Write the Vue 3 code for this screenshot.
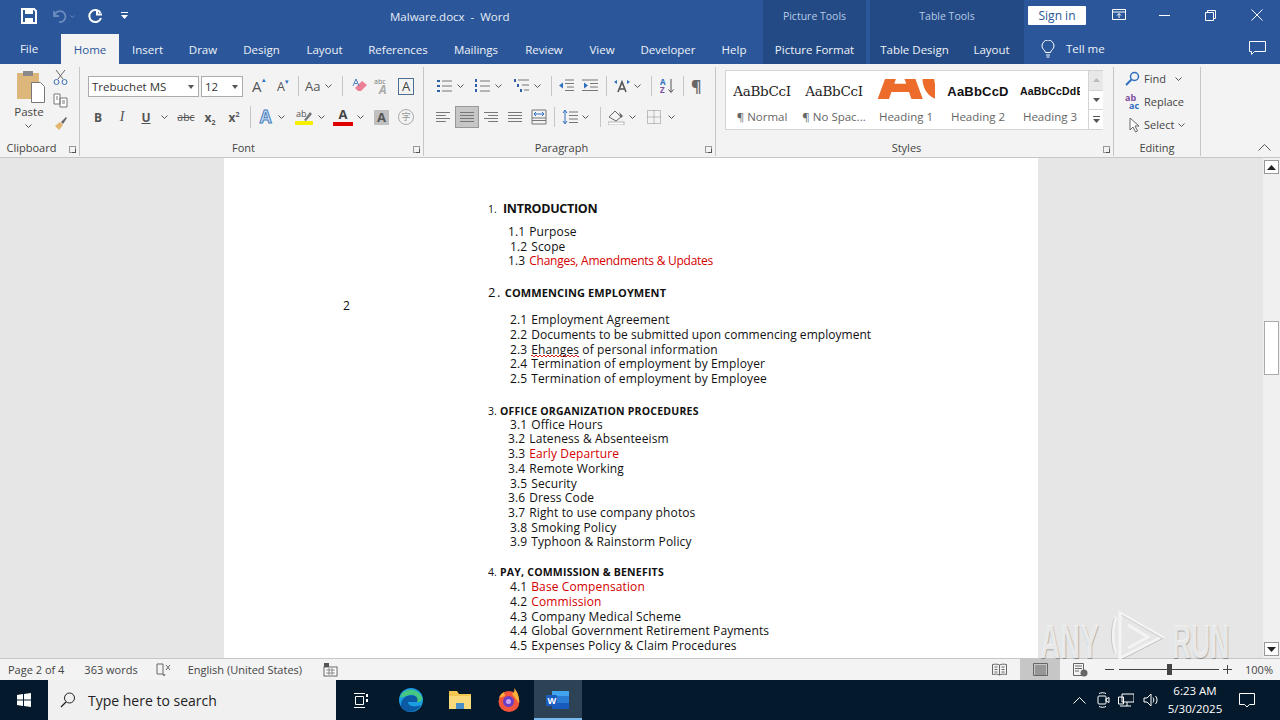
<template>
  <div class="word">
    <header class="titlebar">
      <div class="qat">
        <svg width="16" height="16" viewBox="0 0 16 16"><path d="M1 1h12l2 2v12H1z" fill="none" stroke="#fff" stroke-width="2" /><rect x="4" y="1" width="8" height="5" fill="#fff" /><rect x="4" y="10" width="8" height="5" fill="#fff" /></svg>
        <svg class="qat-undo" width="16" height="16" viewBox="0 0 16 16"><path d="M3 3v5h5M3.500 8A5.500 5.500 0 1 1 8 14" fill="none" stroke="#6a8bbd" stroke-width="1.8" /></svg>
        <svg class="qat-chev" width="5" height="3" viewBox="0 0 5 3"><path d="M.5.5l2 2 2-2" fill="none" stroke="#6a8bbd" /></svg>
        <svg class="qat-redo" width="16" height="16" viewBox="0 0 16 16"><path d="M10 1.500v5h5M13.500 5A6 6 0 1 0 14 10" fill="none" stroke="#fff" stroke-width="2" /></svg>
        <svg class="qat-more" width="8" height="8" viewBox="0 0 8 8"><rect width="7" height="1" fill="#fff" /><path d="M0 3h7L3.500 7z" fill="#fff" /></svg>
      </div>
      <div class="doc-title">Malware.docx&nbsp; -&nbsp; Word</div>
      <div class="ctx ctx-pic">Picture Tools</div>
      <div class="ctx ctx-table">Table Tools</div>
      <div class="sign">Sign in</div>
      <div class="win">
        <svg width="14" height="12" viewBox="0 0 14 12"><path d="M.5.500h13v10H.5zM.5 3h13M7 9V4.500M5 6.500l2-2 2 2" fill="none" stroke="#fff" /></svg>
        <svg width="11" height="1" viewBox="0 0 11 1"><rect width="11" height="1" fill="#fff" /></svg>
        <svg width="11" height="11" viewBox="0 0 11 11"><path d="M.5 2.500h8v8h-8zM2.500 2.500v-2h8v8h-2" fill="none" stroke="#fff" /></svg>
        <svg width="12" height="12" viewBox="0 0 12 12"><path d="M.5.500l11 11M11.500.500l-11 11" stroke="#fff" fill="none" /></svg>
      </div>
    </header>

    <nav class="tabs">
      <span
        v-for="t in tabs"
        :key="t.label + t.w"
        class="tab"
        :class="[t.cls, { 'tab--on': t.on, 'tab--ctx': t.ctx }]"
        :style="{ width: t.w + 'px' }"
      >{{ t.label }}</span>
      <svg class="bulb" width="14" height="18" viewBox="0 0 14 18"><path d="M4.500 12.500C4 10 1 9 1 6a6 6 0 0 1 12 0c0 3-3 4-3.500 6.500zM5 15h4M5.500 17h3" fill="none" stroke="#fff" /></svg>
      <span class="tell">Tell me</span>
      <svg class="comment" width="17" height="15" viewBox="0 0 17 15"><path d="M.5.500h16v10H5.500l-3 3v-3h-2z" fill="none" stroke="#fff" /></svg>
    </nav>

    <section class="ribbon">
      <div class="group g-clip">
        <div class="g-body clip-body">
          <div class="paste">
            <svg width="30" height="34" viewBox="0 0 30 34"><rect x="1" y="3" width="22" height="26" fill="#dcb67a" /><rect x="7" y="1" width="10" height="5" fill="#8a8a8a" /><path d="M15.500 12.500h9l4 4v16h-13z" fill="#fff" stroke="#777" /></svg>
            <span class="paste-label">Paste</span>
            <svg class="chev" width="7" height="4" viewBox="0 0 7 4"><path d="M.5.500l3 3 3-3" fill="none" stroke="#555" /></svg>
          </div>
          <div class="clip-tools">
            <svg width="15" height="16" viewBox="0 0 15 16"><path d="M3 1l7 9M12 1L5 10" stroke="#666" fill="none" /><circle cx="3.500" cy="13" r="2.500" fill="none" stroke="#3c6eb4" /><circle cx="11.500" cy="13" r="2.500" fill="none" stroke="#3c6eb4" /></svg>
            <svg width="15" height="15" viewBox="0 0 15 15"><path d="M1 1h6v10H1zM7 5h7v9H7z" fill="#fff" stroke="#777" /><path d="M9 8h3M9 10h3M3 4h2M3 6h2" stroke="#777" /></svg>
            <svg width="15" height="15" viewBox="0 0 15 15"><path d="M8 6l5-5 1 1-4 6z" fill="#666" /><path d="M2 10l5-4 3 3-4 5z" fill="#e3b56e" /></svg>
          </div>
        </div>
        <div class="g-label">Clipboard<i class="launcher" /></div>
      </div>

      <div class="group g-font">
        <div class="g-body">
          <div class="row font-row1">
            <div class="combo combo-name">Trebuchet MS<b class="caret" /></div>
            <div class="combo combo-size">12<b class="caret" /></div>
            <span class="btn btn-a1">A<sup>▴</sup></span>
            <span class="btn btn-a2">A<sup>▾</sup></span>
            <i class="vsep" />
            <span class="btn btn-aa">Aa</span>
            <svg class="chev" width="7" height="4" viewBox="0 0 7 4"><path d="M.5.500l3 3 3-3" fill="none" stroke="#555" /></svg>
            <i class="vsep vsep-2" />
            <svg class="ic-erase" width="16" height="16" viewBox="0 0 16 16"><path d="M6 13l-3-3 7-7 5 4-6 6z" fill="#ec7f96" /><path d="M1 8l3-7 3 7M2.500 5.500h3" fill="none" stroke="#4d7cb8" /></svg>
            <svg class="ic-abc" width="15" height="16" viewBox="0 0 15 16"><text x="0" y="6" font-size="7" font-family="Open Sans" fill="#777">abc</text><text x="5" y="16" font-size="12" font-weight="700" font-style="italic" font-family="Open Sans" fill="#aaa">A</text></svg>
            <span class="ic-box">A</span>
          </div>
          <div class="row font-row2">
            <span class="fmt fmt-b">B</span>
            <span class="fmt fmt-i">I</span>
            <span class="fmt fmt-u">U</span>
            <svg class="chev" width="7" height="4" viewBox="0 0 7 4"><path d="M.5.500l3 3 3-3" fill="none" stroke="#555" /></svg>
            <span class="fmt fmt-s">abc</span>
            <span class="fmt fmt-x">x<sub>2</sub></span>
            <span class="fmt fmt-x">x<sup>2</sup></span>
            <i class="vsep vsep-3" />
            <span class="fmt fmt-fx">A</span>
            <svg class="chev" width="7" height="4" viewBox="0 0 7 4"><path d="M.5.500l3 3 3-3" fill="none" stroke="#555" /></svg>
            <svg class="ic-hl" width="18" height="16" viewBox="0 0 18 16"><rect y="12" width="18" height="4" fill="#f4f000" /><path d="M9 11l6-8 2 2-6 7z" fill="#777" /><text x="1" y="8" font-size="9" font-family="Open Sans" fill="#555">ab</text></svg>
            <svg class="chev" width="7" height="4" viewBox="0 0 7 4"><path d="M.5.500l3 3 3-3" fill="none" stroke="#555" /></svg>
            <span class="fmt fmt-red">A</span>
            <svg class="chev" width="7" height="4" viewBox="0 0 7 4"><path d="M.5.500l3 3 3-3" fill="none" stroke="#555" /></svg>
            <span class="fmt fmt-grey">A</span>
            <span class="fmt fmt-zi">字</span>
          </div>
        </div>
        <div class="g-label">Font<i class="launcher" /></div>
      </div>

      <div class="group g-para">
        <div class="g-body">
          <div class="row para-row1">
            <svg class="p-list" width="16" height="14" viewBox="0 0 16 14"><path d="M6 2h10M6 7h10M6 12h10" stroke="#777" /><path d="M1 1h3v2H1zM1 6h3v2H1zM1 11h3v2H1z" fill="#2f5fa5" /></svg>
            <svg class="chev" width="7" height="4" viewBox="0 0 7 4"><path d="M.5.500l3 3 3-3" fill="none" stroke="#555" /></svg>
            <svg class="p-list p-gap" width="16" height="14" viewBox="0 0 16 14"><path d="M6 2h10M6 7h10M6 12h10" stroke="#777" /><path d="M1 0h2v3H1zM1 5h2v3H1zM1 10h2v3H1z" fill="#2f5fa5" /></svg>
            <svg class="chev" width="7" height="4" viewBox="0 0 7 4"><path d="M.5.500l3 3 3-3" fill="none" stroke="#555" /></svg>
            <svg class="p-list p-gap2" width="16" height="14" viewBox="0 0 16 14"><path d="M5 1h11M9 6h7M11 11h5" stroke="#777" /><path d="M1 0h2v3H1zM4 5h2v3H4zM7 10h2v3H7z" fill="#2f5fa5" /></svg>
            <svg class="chev" width="7" height="4" viewBox="0 0 7 4"><path d="M.5.500l3 3 3-3" fill="none" stroke="#555" /></svg>
            <i class="vsep vsep-p" />
            <svg class="p-ind" width="16" height="14" viewBox="0 0 16 14"><path d="M7 1h9M7 4.500h9M9 8h7M7 11.500h9" stroke="#777" /><path d="M1 6.500l4-3v6z" fill="#2f6fc0" /></svg>
            <svg class="p-ind" width="16" height="14" viewBox="0 0 16 14"><path d="M0 1h16M8 4.500h8M8 8h8M0 11.500h16" stroke="#777" /><path d="M6 6.500l-4-3v6z" fill="#2f6fc0" /></svg>
            <i class="vsep vsep-p2" />
            <svg class="p-dir" width="16" height="14" viewBox="0 0 16 14"><path d="M4 13L8 3l4 10M5.500 10h5" fill="none" stroke="#555" stroke-width="1.6" /><path d="M0 3l3-2v4zM16 3l-3-2v4z" fill="#2f6fc0" /></svg>
            <svg class="chev" width="7" height="4" viewBox="0 0 7 4"><path d="M.5.500l3 3 3-3" fill="none" stroke="#555" /></svg>
            <i class="vsep vsep-p3" />
            <svg class="p-sort" width="16" height="16" viewBox="0 0 16 16"><text x="0" y="7" font-size="8" font-weight="700" font-family="Open Sans" fill="#2f6fc0">A</text><text x="0" y="15" font-size="8" font-weight="700" font-family="Open Sans" fill="#7b4fa0">Z</text><path d="M11 1v13M8.500 11.500L11 14.500l2.500-3" fill="none" stroke="#555" /></svg>
            <i class="vsep vsep-p4" />
            <span class="pilcrow">¶</span>
          </div>
          <div class="row para-row2">
            <span class="al-btn"><i class="al al-l" /></span>
            <span class="al-btn al-btn--on"><i class="al al-c" /></span>
            <span class="al-btn"><i class="al al-r" /></span>
            <span class="al-btn"><i class="al al-j" /></span>
            <svg class="p-dist" width="16" height="16" viewBox="0 0 16 16"><path d="M1 1h14v14H1zM1 9h14M1 11.500h14" fill="none" stroke="#777" /><path d="M3 5h10M3 5l2-2M3 5l2 2M13 5l-2-2M13 5l-2 2" fill="none" stroke="#2f6fc0" /></svg>
            <i class="vsep vsep-p5" />
            <svg class="p-lh" width="16" height="16" viewBox="0 0 16 16"><path d="M7 3h9M7 6.500h9M7 10h9M7 13.500h9" stroke="#777" /><path d="M3 2v12M1 4l2-3 2 3M1 12l2 3 2-3" fill="none" stroke="#2f6fc0" /></svg>
            <svg class="chev" width="7" height="4" viewBox="0 0 7 4"><path d="M.5.500l3 3 3-3" fill="none" stroke="#555" /></svg>
            <i class="vsep vsep-p6" />
            <svg class="p-fill" width="17" height="16" viewBox="0 0 17 16"><path d="M1 8l6-6 6 6-5 4z" fill="none" stroke="#666" /><path d="M11 3l4 4-2 2z" fill="#666" /><rect y="13" width="16" height="3" fill="#fff" stroke="#888" stroke-width=".6" /></svg>
            <svg class="chev" width="7" height="4" viewBox="0 0 7 4"><path d="M.5.500l3 3 3-3" fill="none" stroke="#555" /></svg>
            <svg class="p-bord" width="14" height="14" viewBox="0 0 14 14"><path d="M.5.500h13v13H.5zM7 .5v13M.5 7h13" fill="none" stroke="#888" stroke-dasharray="1 1" /></svg>
            <svg class="chev" width="7" height="4" viewBox="0 0 7 4"><path d="M.5.500l3 3 3-3" fill="none" stroke="#555" /></svg>
          </div>
        </div>
        <div class="g-label">Paragraph<i class="launcher" /></div>
      </div>

      <div class="group g-styles">
        <div class="g-body">
          <div class="gallery">
            <div v-for="s in styles" :key="s.name" class="style-item">
              <span class="style-sample" :class="s.cls">{{ s.sample }}</span>
              <span class="style-name">{{ s.name }}</span>
            </div>
            <div class="gallery-scroll">
              <span class="gs gs-up"><svg width="7" height="4" viewBox="0 0 7 4"><path d="M0 4l3.500-4L7 4z" fill="#bbb" /></svg></span>
              <span class="gs"><svg width="7" height="4" viewBox="0 0 7 4"><path d="M0 0l3.500 4L7 0z" fill="#555" /></svg></span>
              <span class="gs"><svg width="7" height="7" viewBox="0 0 7 7"><rect width="7" height="1" fill="#555" /><path d="M0 3l3.500 4L7 3z" fill="#555" /></svg></span>
            </div>
          </div>
        </div>
        <div class="g-label">Styles<i class="launcher" /></div>
      </div>

      <div class="group g-edit">
        <div class="g-body edit-body">
          <div class="edit-row">
            <svg width="15" height="15" viewBox="0 0 15 15"><circle cx="9.500" cy="5.500" r="4" fill="none" stroke="#2f6fc0" stroke-width="1.5" /><path d="M6.500 8.500L1 14" stroke="#2f6fc0" stroke-width="2" /></svg>
            <span>Find</span>
            <svg class="chev edit-chev" width="7" height="4" viewBox="0 0 7 4"><path d="M.5.500l3 3 3-3" fill="none" stroke="#555" /></svg>
          </div>
          <div class="edit-row">
            <svg width="15" height="16" viewBox="0 0 15 16"><text x="0" y="7" font-size="9" font-weight="700" font-family="Open Sans" fill="#7b4fa0">ab</text><text x="4" y="15" font-size="9" font-weight="700" font-family="Open Sans" fill="#2f6fc0">ac</text></svg>
            <span>Replace</span>
          </div>
          <div class="edit-row edit-sel">
            <svg width="11" height="16" viewBox="0 0 11 16"><path d="M1 1v12l3-3 2.500 5 2-1L6 9h4z" fill="#fff" stroke="#666" /></svg>
            <span>Select</span>
            <svg class="chev" width="7" height="4" viewBox="0 0 7 4"><path d="M.5.500l3 3 3-3" fill="none" stroke="#555" /></svg>
          </div>
        </div>
        <div class="g-label g-label--edit">Editing</div>
      </div>
      <svg class="collapse" width="13" height="7" viewBox="0 0 13 7"><path d="M.5 6.500l6-6 6 6" fill="none" stroke="#555" /></svg>
    </section>

    <main class="workspace">
      <div class="gutter">
        <article class="page">
          <div class="page-num">2</div>
          <p
            v-for="l in docLines"
            :key="l.y"
            class="line"
            :style="{ marginTop: l.gap + 'px', paddingLeft: l.x + 'px' }"
          >
            <span :class="l.numCls">{{ l.num }}</span>
            <span class="line-text" :class="l.cls" :style="l.ls ? { letterSpacing: l.ls + 'px' } : null"><span v-if="l.typo" class="typo">{{ l.typo }}</span>{{ l.text }}</span>
          </p>
        </article>
      </div>
      <aside class="vscroll">
        <span class="sb-btn"><svg width="9" height="5" viewBox="0 0 9 5"><path d="M0 5l4.500-5L9 5z" fill="#222" /></svg></span>
        <span class="sb-thumb" />
        <span class="sb-btn"><svg width="9" height="5" viewBox="0 0 9 5"><path d="M0 0l4.500 5L9 0z" fill="#222" /></svg></span>
      </aside>
      <div class="watermark">
        <span class="wm-any">ANY</span>
        <svg class="wm-logo" width="72" height="48" viewBox="0 0 72 48"><path d="M16 6c-4 8-4 28 0 36M20 2l42 24-42 21zM28 14l20 12-20 11" fill="none" stroke="#f6f6f6" stroke-opacity=".85" stroke-width="3" /><path d="M21.500 4l41 23.500-41 21M14.500 7c-4 8-4 27 0 35" fill="none" stroke="#000" stroke-opacity=".16" /></svg>
        <span class="wm-run">RUN</span>
      </div>
    </main>

    <footer class="status">
      <span>Page 2 of 4</span>
      <span class="st-words">363 words</span>
      <svg class="st-book" width="15" height="15" viewBox="0 0 15 15"><path d="M7 2H1v10h6l1 2 1-2M7 2v10" fill="none" stroke="#666" /><path d="M10 3l4 5M14 3l-4 5" stroke="#666" /></svg>
      <span class="st-lang">English (United States)</span>
      <svg class="st-cal" width="15" height="15" viewBox="0 0 15 15"><rect x="1" y="5" width="13" height="9" fill="#fff" stroke="#666" /><rect x="1" y="1" width="5" height="4" fill="#555" /><path d="M3 8h9M3 11h9M6 6v7M9 6v7" stroke="#888" /></svg>
      <div class="st-right">
        <svg width="15" height="13" viewBox="0 0 15 13"><path d="M7.500 2C6 1 3 1 .5 1.500v10C3 11 6 11 7.500 12c1.500-1 4.500-1 7-.5v-10C12 1 9 1 7.500 2zM7.500 2v10M2.500 4h3M2.500 6.500h3M2.500 9h3M9.500 4h3M9.500 6.500h3M9.500 9h3" fill="none" stroke="#666" /></svg>
        <span class="view-on"><svg width="15" height="13" viewBox="0 0 15 13"><path d="M.5.500h14v12H.5zM2 3h11M2 5h11M2 7h11M2 9h11M2 11h11" fill="none" stroke="#666" /></svg></span>
        <svg width="15" height="14" viewBox="0 0 15 14"><path d="M.5.500h10v12H.5zM2 3h7M2 5.500h7M2 8h4" fill="none" stroke="#666" /><circle cx="11" cy="10" r="3.500" fill="#666" /></svg>
        <div class="zoom-ctl">
          <svg width="9" height="9" viewBox="0 0 9 9"><path d="M0 4.500h9" stroke="#444" /></svg>
          <div class="z-track"><i class="z-thumb" /></div>
          <svg width="9" height="9" viewBox="0 0 9 9"><path d="M0 4.500h9M4.500 0v9" stroke="#444" /></svg>
        </div>
        <span class="z-val">100%</span>
      </div>
    </footer>

    <div class="taskbar">
      <span class="tb-start">
        <svg width="14" height="14" viewBox="0 0 14 14"><path d="M0 2l6-.9V6.500H0zM7 1l7-1v6.500H7zM0 7.500h6v5.500l-6-.9zM7 7.500h7V14l-7-1z" fill="#fff" /></svg>
      </span>
      <div class="tb-search">
        <svg width="16" height="16" viewBox="0 0 16 16"><circle cx="9.500" cy="6" r="5" fill="none" stroke="#222" /><path d="M6 10l-5 5" stroke="#222" stroke-width="1.2" /></svg>
        <span>Type here to search</span>
      </div>
      <span class="tb-app">
        <svg width="14" height="15" viewBox="0 0 14 15"><path d="M0 .5h11M0 14.500h11M1.500 3.500h8v8h-8z" fill="none" stroke="#fff" /><path d="M12 1h2v3h-2zM12 6h2v3h-2z" fill="#fff" /></svg>
      </span>
      <span class="tb-app tb-edge">
        <svg width="24" height="24" viewBox="0 0 24 24"><circle cx="12" cy="12" r="12" fill="#1b9de2" /><path d="M2 16C3 8 12 5 18 9c3 2 2 5 0 5H9c0 4 6 6 13 3-3 6-10 8-15 6-4-2-6-4-5-7z" fill="#0c59a4" /><path d="M1 9C4 1 17-2 23 9c1 4-2 5-5 5 2-5-3-8-8-7-4 1-7 3-9 2z" fill="#4ed06e" opacity=".85" /></svg>
      </span>
      <span class="tb-app">
        <svg width="22" height="18" viewBox="0 0 22 18"><path d="M0 0h8l2 3h12v15H0z" fill="#f3c652" /><rect y="5" width="22" height="13" fill="#fad97a" /><rect x="7" y="12" width="8" height="6" fill="#4a90c8" /></svg>
      </span>
      <span class="tb-app">
        <svg width="22" height="24" viewBox="0 0 22 24"><circle cx="11" cy="13.500" r="10.500" fill="#f2553c" /><path d="M21 12c0-5-2-9-5-12 1 3 0 5-2 6l7 9z" fill="#fbb03b" /><path d="M1 10c1-3 3-5 5-6l1 4z" fill="#fbb03b" /><circle cx="10.500" cy="13.500" r="5.500" fill="#6b3fc4" /><circle cx="10.500" cy="13.500" r="2.500" fill="#c9a6ef" /></svg>
      </span>
      <span class="tb-app tb-app--on">
        <svg width="24" height="20" viewBox="0 0 24 20"><path d="M6 1h16a1 1 0 0 1 1 1v16a1 1 0 0 1-1 1H6z" fill="#2b7cd3" /><rect x="6" y="1" width="17" height="5" fill="#41a5ee" /><rect x="6" y="13" width="17" height="6" fill="#185abd" /><rect y="5" width="11" height="11" rx="1" fill="#1a5cbf" /><text x="1.500" y="14" font-size="9" font-weight="700" font-family="Open Sans" fill="#fff">W</text></svg>
      </span>
      <div class="tray">
        <svg width="13" height="7" viewBox="0 0 13 7"><path d="M.5 6.500l6-6 6 6" fill="none" stroke="#fff" /></svg>
        <svg class="tr-meet" width="13" height="16" viewBox="0 0 13 16"><rect x="1" y="4" width="8" height="8" rx="1" fill="none" stroke="#fff" /><path d="M9 7l3-1.500v5L9 9zM2 1.500c2-1 5-1 7 0M2 14.500c2 1 5 1 7 0" fill="none" stroke="#fff" /></svg>
        <svg class="tr-net" width="16" height="14" viewBox="0 0 16 14"><path d="M4 1h12v8H4zM.5 4h5v7h-5zM2 13h11M9 9v4" fill="#0a1a2a" stroke="#fff" /></svg>
        <svg class="tr-vol" width="16" height="14" viewBox="0 0 16 14"><path d="M1 5h3l4-4v12L4 9H1zM10 4.500c1 1.500 1 3.500 0 5M12.500 3c2 2.500 2 5.500 0 8" fill="none" stroke="#fff" /></svg>
        <div class="clock"><span>6:23 AM</span><span>5/30/2025</span></div>
        <svg width="16" height="15" viewBox="0 0 16 15"><path d="M.5.500h15v11h-5l-2.500 2.500L5.500 11.500h-5z" fill="none" stroke="#fff" /></svg>
      </div>
    </div>
  </div>
</template>

<script setup>
const tabs = [
  { label: 'File', w: 61, cls: 'tab-file' },
  { label: 'Home', w: 58, on: true },
  { label: 'Insert', w: 57 },
  { label: 'Draw', w: 54 },
  { label: 'Design', w: 63 },
  { label: 'Layout', w: 63 },
  { label: 'References', w: 84 },
  { label: 'Mailings', w: 72 },
  { label: 'Review', w: 64 },
  { label: 'View', w: 52 },
  { label: 'Developer', w: 80 },
  { label: 'Help', w: 52 },
  { label: 'Picture Format', w: 103, ctx: true, cls: 'tab-pic' },
  { label: 'Table Design', w: 89, ctx: true, cls: 'tab-table' },
  { label: 'Layout', w: 65, ctx: true },
]

const styles = [
  { name: '¶ Normal', sample: 'AaBbCcI', cls: 's-serif' },
  { name: '¶ No Spac...', sample: 'AaBbCcI', cls: 's-serif' },
  { name: 'Heading 1', sample: 'AC', cls: 's-h1' },
  { name: 'Heading 2', sample: 'AaBbCcD', cls: 's-h2' },
  { name: 'Heading 3', sample: 'AaBbCcDdE', cls: 's-h3' },
]

// y = centre of the text line, x = offset from the page edge
const rawLines = [
  { y: 208, x: 264, num: '1.', text: 'INTRODUCTION', cls: 'h-big', numCls: 'n-small' },
  { y: 231, x: 284, num: '1.1', text: 'Purpose' },
  { y: 246, x: 286, num: '1.2', text: 'Scope' },
  { y: 260, x: 284, num: '1.3', text: 'Changes, Amendments & Updates', cls: 'red', ls: -0.26 },
  { y: 291, x: 264, num: '2.', text: 'COMMENCING EMPLOYMENT', cls: 'h-mid', numCls: 'n-big' },
  { y: 319, x: 286, num: '2.1', text: 'Employment Agreement' },
  { y: 334, x: 286, num: '2.2', text: 'Documents to be submitted upon commencing employment', ls: 0.04 },
  { y: 349, x: 286, num: '2.3', typo: 'Ehanges', text: ' of personal information' },
  { y: 363, x: 286, num: '2.4', text: 'Termination of employment by Employer' },
  { y: 378, x: 286, num: '2.5', text: 'Termination of employment by Employee' },
  { y: 410, x: 264, num: '3.', text: 'OFFICE ORGANIZATION PROCEDURES', cls: 'h-sm', numCls: 'n-small' },
  { y: 424, x: 286, num: '3.1', text: 'Office Hours' },
  { y: 438, x: 284, num: '3.2', text: 'Lateness & Absenteeism' },
  { y: 453, x: 284, num: '3.3', text: 'Early Departure', cls: 'red' },
  { y: 468, x: 284, num: '3.4', text: 'Remote Working' },
  { y: 483, x: 286, num: '3.5', text: 'Security' },
  { y: 497, x: 284, num: '3.6', text: 'Dress Code' },
  { y: 512, x: 284, num: '3.7', text: 'Right to use company photos' },
  { y: 527, x: 286, num: '3.8', text: 'Smoking Policy' },
  { y: 541, x: 286, num: '3.9', text: 'Typhoon & Rainstorm Policy' },
  { y: 571, x: 264, num: '4.', text: 'PAY, COMMISSION & BENEFITS', cls: 'h-sm', numCls: 'n-small' },
  { y: 586, x: 286, num: '4.1', text: 'Base Compensation', cls: 'red' },
  { y: 601, x: 286, num: '4.2', text: 'Commission', cls: 'red' },
  { y: 616, x: 286, num: '4.3', text: 'Company Medical Scheme' },
  { y: 630, x: 286, num: '4.4', text: 'Global Government Retirement Payments' },
  { y: 645, x: 286, num: '4.5', text: 'Expenses Policy & Claim Procedures' },
]

const LINE_H = 14
const DOC_TOP = 157

const docLines = rawLines.map((l, i) => {
  const prevBottom = i === 0 ? DOC_TOP : rawLines[i - 1].y + LINE_H / 2
  return { ...l, gap: l.y - LINE_H / 2 - prevBottom }
})
</script>

<style>
html, body {
  margin: 0;
  overflow: hidden;
  background: #e6e6e6;
}
</style>

<style scoped>
.word {
  position: relative;
  width: 1280px;
  height: 720px;
  display: flex;
  flex-direction: column;
  overflow: hidden;
  font-family: "Open Sans", "Noto Sans", sans-serif;
  font-size: 12px;
  color: #444;
}

/* title bar */
.titlebar {
  height: 32px;
  flex: none;
  display: flex;
  background: #2b579a;
  color: #fff;
}
.titlebar > * { flex: none; }
.qat {
  width: 330px;
  display: flex;
  align-items: center;
  padding-left: 21px;
  box-sizing: border-box;
}
.qat-undo { margin-left: 14px; }
.qat-chev { margin-left: 3px; }
.qat-redo { margin-left: 12px; }
.qat-more { margin-left: 18px; }
.doc-title {
  width: 433px;
  padding-left: 60px;
  box-sizing: border-box;
  line-height: 34px;
  font-size: 11.5px;
  color: #e6ecf5;
}
.ctx {
  height: 32px;
  line-height: 32px;
  text-align: center;
  font-size: 10.5px;
  background: #234a85;
  color: #b6cbe6;
}
.ctx-pic { width: 103px; margin-right: 4px; }
.ctx-table { width: 154px; }
.sign {
  width: 58px;
  height: 19px;
  margin: 6px 0 0 4px;
  background: #fff;
  color: #2b579a;
  text-align: center;
  line-height: 20px;
  border-radius: 1px;
}
.win {
  display: flex;
  align-items: center;
  margin-left: 26px;
}
.win svg { margin-top: -2px; margin-right: 35px; }
.win svg:first-child { margin-right: 33px; }

/* tabs */
.tabs {
  height: 32px;
  flex: none;
  display: flex;
  background: #2b579a;
  color: #eef2f8;
  position: relative;
}
.tab {
  text-align: center;
  line-height: 35px;
  font-size: 11.5px;
  flex: none;
  box-sizing: border-box;
}
.tab-file { padding-right: 3px; line-height: 33px; }
.tab--on {
  background: #f3f3f3;
  color: #2b579a;
  height: 30px;
  margin-top: 2px;
  line-height: 31px;
}
.tab--ctx { background: #234a85; }
.tab-pic { margin-left: 3px; margin-right: 4px; }
.bulb { margin: 8px 0 0 17px; }
.tell { margin-left: 11px; line-height: 33px; font-size: 11.5px; }
.comment { position: absolute; left: 1249px; top: 9px; }

/* ribbon */
.ribbon {
  height: 93px;
  flex: none;
  display: flex;
  background: #f3f3f3;
  border-bottom: 1px solid #c6c6c6;
  position: relative;
}
.group {
  display: flex;
  flex-direction: column;
  height: 89px;
  flex: none;
  border-right: 1px solid #c6c6c6;
  box-sizing: border-box;
  margin-top: 3px;
  position: relative;
}
.g-body { flex: 1; min-height: 0; }
.g-label {
  height: 18px;
  flex: none;
  line-height: 20px;
  text-align: center;
  font-size: 11px;
  color: #444;
  position: relative;
  padding-right: 16px;
}
.g-label--edit { padding-right: 0; }
.launcher {
  position: absolute;
  right: 3px;
  bottom: 3px;
  width: 5px;
  height: 5px;
  border: 1px solid #999;
}
.launcher::after {
  content: "";
  position: absolute;
  right: -1px;
  bottom: -1px;
  width: 3px;
  height: 3px;
  border-right: 1px solid #555;
  border-bottom: 1px solid #555;
}
.chev { flex: none; }

.g-clip { width: 80px; }
.clip-body { display: flex; padding: 1px 0 0 14px; }
.paste { width: 34px; display: flex; flex-direction: column; align-items: flex-start; }
.paste svg:first-child { margin: 2px 0 0 2px; }
.paste-label { font-size: 11.5px; width: 30px; text-align: center; line-height: 15px; }
.paste .chev { margin: 5px 0 0 11px; }
.clip-tools { display: flex; flex-direction: column; gap: 8px; padding: 1px 0 0 5px; }

.g-font { width: 344px; }
.row { display: flex; align-items: center; height: 24px; }
.font-row1 { padding: 7px 0 0 8px; }
.font-row2 { padding: 7px 0 0 12px; }
.combo {
  height: 21px;
  line-height: 20px;
  border: 1px solid #ababab;
  background: #fff;
  box-sizing: border-box;
  padding-left: 3px;
  color: #333;
  position: relative;
  font-size: 11.5px;
}
.combo-name { width: 111px; }
.combo-size { width: 42px; margin-left: 2px; }
.caret {
  position: absolute;
  right: 4px;
  top: 8px;
  border-top: 4px solid #555;
  border-left: 3px solid transparent;
  border-right: 3px solid transparent;
}
.btn { color: #555; display: inline-flex; }
.btn sup { font-size: 7px; line-height: 7px; color: #2f6fc0; }
.btn-a1 { font-size: 15px; margin-left: 9px; width: 20px; }
.btn-a2 { font-size: 12.5px; margin-left: 5px; width: 15px; }
.vsep { width: 1px; height: 20px; background: #c6c6c6; margin: 0 6px; flex: none; }
.btn-aa { font-size: 13px; width: 18px; margin-right: 2px; }
.vsep-2 { margin: 0 9px 0 10px; }
.ic-erase { margin-right: 6px; }
.ic-abc { margin-right: 9px; }
.ic-box {
  width: 14px;
  height: 15px;
  line-height: 15px;
  text-align: center;
  border: 1px solid #4d6f96;
  color: #444;
  font-size: 13px;
}

.fmt { flex: none; text-align: center; color: #555; font-weight: 700; font-size: 12px; }
.fmt-b { width: 12px; margin-right: 12px; }
.fmt-i { width: 12px; margin-right: 12px; font-style: italic; font-weight: 400; font-family: "Liberation Serif", serif; font-size: 14px; }
.fmt-u { width: 12px; text-decoration: underline; margin-right: 9px; }
.fmt-s { width: 18px; margin: 0 -2px 0 9px; font-size: 10.5px; font-weight: 400; text-decoration: line-through; }
.fmt-x { width: 14px; margin-left: 10px; font-size: 12px; }
.fmt-x sub, .fmt-x sup { font-size: 7px; line-height: 0; }
.vsep-3 { margin: 0 6px 0 9px; height: 22px; }
.fmt-fx { width: 17px; margin-right: 4px; color: #c7dcf3; font-size: 17px; -webkit-text-stroke: 1px #4a7fc0; line-height: 18px; }
.ic-hl { margin: 0 5px 0 10px; }
.fmt-red { width: 20px; margin: 0 4px 0 8px; border-bottom: 4px solid #e00000; line-height: 13px; height: 14px; font-size: 13px; color: #444; }
.fmt-grey { width: 15px; margin-left: 10px; background: #c0c0c0; font-size: 13px; line-height: 15px; }
.fmt-zi { width: 14px; height: 14px; margin-left: 9px; border: 1px solid #aaa; border-radius: 50%; font-size: 9px; line-height: 14px; font-weight: 400; color: #999; font-family: "Noto Sans CJK SC", sans-serif; }

.g-para { width: 292px; }
.para-row1 { padding: 7px 0 0 12px; }
.para-row2 { padding: 7px 0 0 7px; }
.p-list { margin-right: 5px; }
.p-gap { margin-left: 10px; }
.p-gap2 { margin-left: 11px; }
.vsep-p { margin: 0 6px 0 10px; }
.p-ind { margin-right: 8px; }
.vsep-p2 { margin: 0 7px 0 0; }
.p-dir { margin-right: 4px; }
.vsep-p3 { margin: 0 8px 0 10px; }
.vsep-p4 { margin: 0 7px; }
.pilcrow { color: #666; font-size: 16px; font-weight: 700; line-height: 16px; }
.al-btn { width: 24px; height: 22px; display: flex; align-items: center; justify-content: center; flex: none; }
.al-btn--on { background: #c6c6c6; border: 1px solid #999; box-sizing: border-box; }
.al {
  display: block;
  width: 14px;
  height: 10px;
  background: repeating-linear-gradient(#777 0 1px, transparent 1px 3px);
}
.al-l { clip-path: polygon(0 0, 100% 0, 100% 3px, 70% 3px, 70% 6px, 100% 6px, 100% 9px, 70% 9px, 70% 100%, 0 100%); }
.al-r { clip-path: polygon(0 0, 100% 0, 100% 100%, 30% 100%, 30% 9px, 0 9px, 0 6px, 30% 6px, 30% 3px, 0 3px); }
.p-dist { margin-left: 4px; }
.vsep-p5 { margin: 0 7px; }
.p-lh { margin-right: 4px; }
.vsep-p6 { margin: 0 7px 0 11px; }
.p-fill { margin-right: 4px; }
.p-bord { margin: 0 7px 0 11px; }

.g-styles { width: 398px; }
.gallery {
  width: 378px;
  height: 60px;
  margin: 3px 0 0 9px;
  display: flex;
  background: #fff;
  border: 1px solid #d4d4d4;
  box-sizing: border-box;
}
.style-item {
  width: 72px;
  flex: none;
  display: flex;
  flex-direction: column;
  align-items: center;
  overflow: hidden;
}
.style-sample { height: 38px; line-height: 41px; white-space: nowrap; color: #222; flex: none; }
.style-name { font-size: 11.5px; line-height: 16px; color: #666; white-space: nowrap; }
.s-serif { font-family: "DejaVu Serif", serif; font-size: 13.5px; letter-spacing: -0.3px; }
.s-h1 {
  font-family: "DejaVu Sans", sans-serif;
  font-size: 60px;
  font-weight: 700;
  letter-spacing: -4px;
  color: #ed6c2c;
  display: block;
  width: 58px;
  height: 20px;
  margin: 8px 0 10px;
  overflow: hidden;
  line-height: 0;
}
.s-h2 { font-family: "Liberation Sans", sans-serif; font-size: 13px; font-weight: 700; letter-spacing: .2px; color: #111; }
.s-h3 { font-family: "Liberation Sans", sans-serif; font-size: 10.5px; font-weight: 700; width: 60px; overflow: hidden; color: #111; letter-spacing: .2px; }
.gallery-scroll {
  margin-left: 2px;
  width: 14px;
  flex: none;
  display: flex;
  flex-direction: column;
  border-left: 1px solid #d4d4d4;
}
.gs { flex: 1; display: flex; align-items: center; justify-content: center; border-bottom: 1px solid #d4d4d4; background: #fff; }
.gs:last-child { border-bottom: 0; }
.gs-up { background: #e8e8e8; }

.g-edit { width: 87px; }
.edit-body { padding-left: 11px; display: flex; flex-direction: column; }
.edit-row { height: 23px; display: flex; align-items: center; gap: 4px; font-size: 11px; color: #444; }
.edit-row svg:first-child { flex: none; }
.edit-chev { margin-left: 5px; }
.edit-sel { padding-left: 4px; }
.collapse { position: absolute; left: 1258px; top: 80px; }

/* document */
.workspace {
  flex: 1;
  display: flex;
  min-height: 0;
  position: relative;
  background: #e6e6e6;
}
.gutter {
  flex: 1;
  padding-left: 224px;
  overflow: hidden;
}
.page {
  width: 814px;
  height: 100%;
  background: #fff;
  position: relative;
  color: #111;
  overflow: hidden;
  font-size: 12px;
}
.page-num { position: absolute; left: 119px; top: 141px; line-height: 14px; }
.line {
  margin: 0;
  height: 14px;
  line-height: 14px;
  white-space: pre;
  letter-spacing: 0.12px;
}
.line-text { margin-left: 4px; }
.red { color: #d40000; }
.typo { position: relative; display: inline-block; }
.typo::after {
  content: "";
  position: absolute;
  left: 0;
  right: 0;
  bottom: 0;
  height: 2px;
  background-image:
    linear-gradient(45deg, transparent 40%, #d02020 40% 60%, transparent 60%),
    linear-gradient(-45deg, transparent 40%, #d02020 40% 60%, transparent 60%);
  background-size: 4px 2px;
  background-position: 0 0, 2px 0;
}
.h-big { font-size: 12.5px; font-weight: 700; letter-spacing: -0.3px; margin-left: 6px; }
.h-mid { font-size: 11px; font-weight: 700; letter-spacing: 0.1px; margin-left: 3px; }
.h-sm { font-size: 10.5px; font-weight: 700; letter-spacing: 0.22px; margin-left: 3px; }
.n-big { font-size: 13px; letter-spacing: 1.5px; }
.n-small { font-size: 10.5px; }
.vscroll {
  width: 17px;
  flex: none;
  background: #f0f0f0;
  display: flex;
  flex-direction: column;
  align-items: center;
  padding: 2px 0;
  box-sizing: border-box;
  position: relative;
}
.sb-btn {
  width: 15px;
  height: 14px;
  background: #fff;
  border: 1px solid #999;
  box-sizing: border-box;
  display: flex;
  align-items: center;
  justify-content: center;
  flex: none;
}
.sb-thumb {
  width: 15px;
  height: 54px;
  background: #fff;
  border: 1px solid #aaa;
  box-sizing: border-box;
  margin: 147px 0 auto;
}
.watermark {
  position: absolute;
  left: 1040px;
  top: 453px;
  width: 192px;
  height: 48px;
  display: flex;
  align-items: flex-end;
  font-family: "Liberation Sans", sans-serif;
  font-size: 48px;
  font-weight: 700;
  line-height: 35px;
  color: rgba(246, 246, 246, 0.85);
  text-shadow: 1px 1px 1px rgba(0, 0, 0, 0.3);
  pointer-events: none;
}
.wm-any, .wm-run { display: block; width: 60px; flex: none; transform-origin: left bottom; white-space: nowrap; }
.wm-any { transform: scaleX(0.58); }
.wm-run { transform: scaleX(0.55); }
.wm-logo { flex: none; }

/* status bar */
.status {
  height: 22px;
  flex: none;
  display: flex;
  align-items: center;
  background: #f3f3f3;
  border-top: 1px solid #c6c6c6;
  box-sizing: border-box;
  padding-left: 8px;
  font-size: 11px;
  color: #444;
}
.st-words { margin-left: 20px; }
.st-book { margin-left: 18px; }
.st-lang { margin-left: 17px; }
.st-cal { margin-left: 21px; }
.st-right { margin-left: auto; display: flex; align-items: center; height: 100%; }
.view-on { width: 40px; height: 100%; background: #c6c6c6; display: flex; align-items: center; justify-content: center; margin: 0 13px; }
.zoom-ctl { display: flex; align-items: center; margin-left: 17px; }
.z-track { width: 100px; height: 1px; background: #444; margin: 0 4px 0 5px; position: relative; }
.z-thumb { position: absolute; left: 48px; top: -5px; width: 5px; height: 11px; background: #444; }
.z-val { margin: 0 7px 0 13px; }

/* taskbar */
.taskbar {
  height: 40px;
  flex: none;
  display: flex;
  align-items: center;
  background: #04192b;
  color: #fff;
}
.tb-start { width: 48px; display: flex; padding-left: 17px; box-sizing: border-box; flex: none; }
.tb-search {
  width: 288px;
  height: 40px;
  flex: none;
  background: #f0f0f0;
  color: #222;
  display: flex;
  align-items: center;
  gap: 12px;
  padding-left: 12px;
  box-sizing: border-box;
  font-size: 14px;
}
.tb-app {
  width: 49px;
  height: 40px;
  display: flex;
  align-items: center;
  justify-content: center;
  flex: none;
}
.tb-edge { margin-left: 1px; }
.tb-app--on { margin-left: 1px; width: 48px; background: #2d4255; box-shadow: inset 0 -2px 0 #76b9ed; }
.tray {
  margin-left: auto;
  display: flex;
  align-items: center;
  height: 100%;
  padding-right: 25px;
}
.tr-meet { margin-left: 11px; }
.tr-net { margin-left: 8px; }
.tr-vol { margin-left: 9px; }
.clock {
  width: 54px;
  display: flex;
  flex-direction: column;
  align-items: center;
  line-height: 18px;
  font-size: 11.5px;
  margin: 0 17px 0 9px;
}
</style>
